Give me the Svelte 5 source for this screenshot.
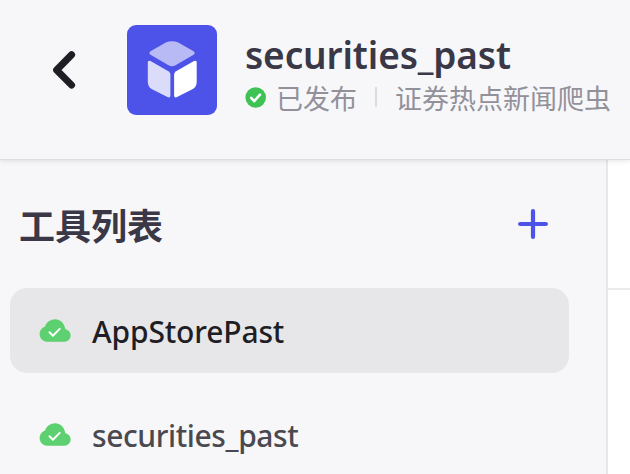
<script>
  const tools = [
    { name: 'AppStorePast', active: true },
    { name: 'securities_past', active: false }
  ];
</script>

<div class="page">
  <header>
    <svg class="back" width="24" height="40" viewBox="0 0 24 40" fill="none" stroke="#1f1e25" stroke-width="7" stroke-linecap="round" stroke-linejoin="round">
      <path d="M19.6 4.7 4.6 20l15 15.1" />
    </svg>
    <svg class="logo" width="90" height="90" viewBox="0 0 90 90">
      <rect width="90" height="90" rx="9" fill="#4d53e8" />
      <path fill="#b8baf6" d="M23.5 26.2 38.8 17.6Q45 14.8 51.2 17.6L66.6 26.2Q68.8 28 66.6 29.8L48.5 40.2Q45 42.4 41.5 40.2L23.5 29.8Q21.3 28 23.5 26.2Z" />
      <path fill="#dbdcfa" d="M20.8 37Q21.3 35 23.5 36L41.4 46.2Q43.4 47.5 43.4 49.5V70.5Q43.3 73 41 72.3L24.6 64Q20.8 61.5 20.8 57Z" />
      <path fill="#fff" d="M69.7 37Q69.2 35 67 36L49.1 46.2Q47.1 47.5 47.1 49.5V70.5Q47.2 73 49.5 72.3L65.9 64Q69.7 61.5 69.7 57Z" />
    </svg>
    <div class="info">
      <h1>securities_past</h1>
      <div class="meta">
        <svg width="21" height="21" viewBox="0 0 21 21">
          <circle cx="10.7" cy="10.5" r="10.3" fill="#3ec254" />
          <path d="m6.2 10.8 3 3.4 5.8-6.5" fill="none" stroke="#fff" stroke-width="2.5" stroke-linecap="round" stroke-linejoin="round" />
        </svg>
        <span class="status">已发布</span>
        <i></i>
        <span>证券热点新闻爬虫</span>
      </div>
    </div>
  </header>
  <div class="body">
    <aside>
      <div class="heading">
        <h2>工具列表</h2>
        <svg width="30" height="30" viewBox="0 0 30 30" fill="none" stroke="#4d53e8" stroke-width="4.2" stroke-linecap="round">
          <path d="M15 2.1v25.8M2.1 15h25.8" />
        </svg>
      </div>
      {#each tools as tool}
        <div class="tool" class:active={tool.active}>
          <svg width="32" height="23" viewBox="0 0 32 23">
            <path fill="#5dd06f" d="M7.9 22.8A7.8 7.8 0 0 1 6 7.6C7.6 3 11.4.2 16.2.2c5 0 9 3.4 10.2 10.1A6.3 6.3 0 0 1 25.6 22.8Z" />
            <path d="m10.5 13.2 3.4 3.5 6.8-6.8" fill="none" stroke="#fff" stroke-width="2" stroke-linecap="round" stroke-linejoin="round" />
          </svg>
          <span>{tool.name}</span>
        </div>
      {/each}
    </aside>
    <main><div class="toolbar"></div></main>
  </div>
</div>

<style>
  .page {
    width: 630px;
    height: 474px;
    overflow: hidden;
    display: flex;
    flex-direction: column;
    background: #f7f7fa;
    font-family: "Noto Sans", "Noto Sans CJK SC", sans-serif;
  }
  header {
    box-sizing: border-box;
    height: 160px;
    flex: none;
    display: flex;
    align-items: flex-start;
    padding: 25px 0 0 52px;
    border-bottom: 1px solid #dedee1;
    box-shadow: 0 1px 5px rgba(0, 0, 0, 0.1);
    z-index: 1;
  }
  .back {
    margin: 25px 51px 0 0;
  }
  .info {
    margin-left: 28px;
    white-space: nowrap;
  }
  h1 {
    margin: 5px 0 0;
    font-size: 37px;
    line-height: 50px;
    font-weight: 600;
    letter-spacing: -0.12px;
    color: #3a3847;
  }
  .meta {
    height: 36px;
    display: flex;
    align-items: center;
    font: 27px/36px "Noto Sans CJK SC", sans-serif;
    font-weight: 400;
    color: #92919a;
  }
  .meta svg {
    margin-top: -2px;
  }
  .status {
    margin-left: 10px;
  }
  i {
    width: 2px;
    height: 20px;
    margin: -3px 18px 0 18px;
    background: #dcdce0;
  }
  .body {
    flex: 1;
    display: flex;
  }
  aside {
    box-sizing: border-box;
    width: 608px;
    border-right: 2px solid #e7e7ea;
    padding-left: 10px;
  }
  .heading {
    height: 128px;
    display: flex;
    align-items: center;
    justify-content: space-between;
    padding: 0 58px 0 9px;
  }
  h2 {
    margin: 0;
    font: 700 36px/50px "Noto Sans CJK SC", sans-serif;
    color: #3a3847;
  }
  .tool {
    box-sizing: border-box;
    width: 559px;
    height: 85px;
    margin-bottom: 19px;
    padding-left: 29px;
    display: flex;
    align-items: center;
    gap: 21px;
    border-radius: 17px;
    font-size: 30px;
    font-weight: 500;
    letter-spacing: -0.4px;
    color: #4a494f;
  }
  .active {
    background: #e7e7e9;
    letter-spacing: -0.15px;
    color: #1f1e25;
  }
  .tool span {
    padding-top: 1px;
  }
  main {
    flex: 1;
    background: #fff;
  }
  .toolbar {
    height: 128px;
    border-bottom: 2px solid #ebebed;
  }
</style>
